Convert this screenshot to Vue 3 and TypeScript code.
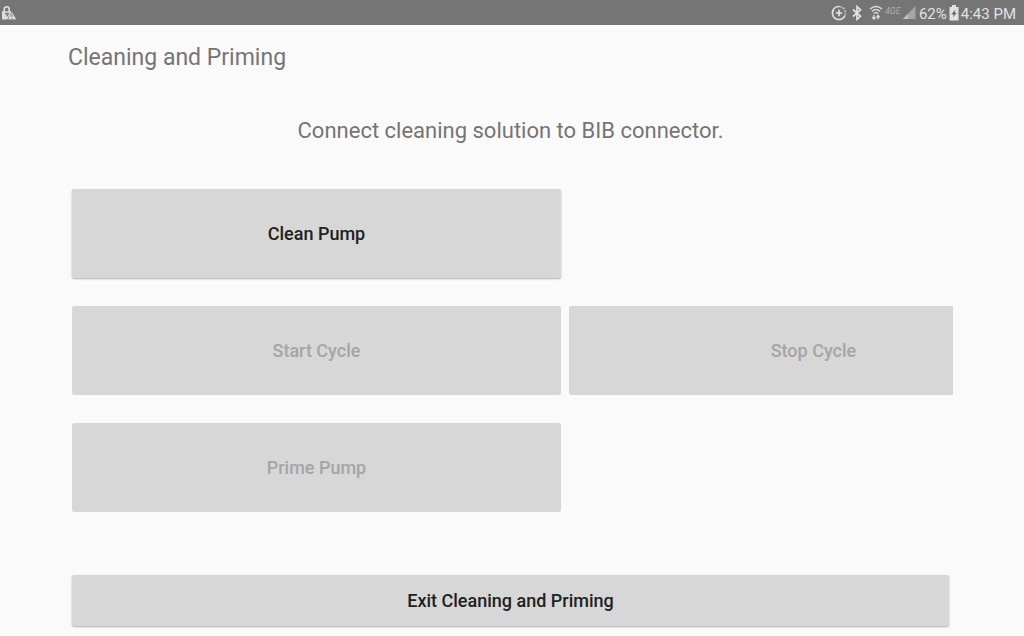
<script setup lang="ts">
import { ref } from 'vue'

interface PumpAction {
  label: string
  disabled: boolean
}

const rows = ref<PumpAction[][]>([
  [{ label: 'Clean Pump', disabled: false }],
  [
    { label: 'Start Cycle', disabled: true },
    { label: 'Stop Cycle', disabled: true },
  ],
  [{ label: 'Prime Pump', disabled: true }],
])
</script>

<template>
  <div class="screen">
    <header class="status">
      <svg class="lock" width="16" height="16" viewBox="0 0 16 16" aria-hidden="true">
        <path d="M3.200 7V4.500a2.500 2.700 0 0 1 5 0V7" fill="none" stroke="#dedede" stroke-width="1.600" />
        <path d="M1 6.200h9.500v2L6.500 14.500H1z" fill="#dedede" />
        <path d="M4 8.500h3.300L5.500 11.500" fill="none" stroke="#757575" stroke-width="1.300" />
        <path d="M11 6.500l4.800 8.300H6.500z" fill="#dedede" stroke="#757575" stroke-width=".7" />
        <path d="M11 9.200v2.600M11 12.800v1" stroke="#757575" stroke-width="1" />
      </svg>
      <div class="indicators">
        <svg class="saver" width="16" height="16" viewBox="0 0 16 16" aria-hidden="true">
          <path d="M8 1.500a6.500 6.500 0 1 0 5.800 9.300" fill="none" stroke="#e4e4e4" stroke-width="1.700" />
          <path d="M8 1.500a6.500 6.500 0 0 1 5.800 9.300" fill="none" stroke="#c2c2c2" stroke-width="1.500" stroke-dasharray="2.500 1" />
          <path d="M8 4.800v6.400M4.800 8h6.400" stroke="#e6e6e6" stroke-width="1.700" />
        </svg>
        <svg class="bluetooth" width="12" height="16" viewBox="0 0 12 16" aria-hidden="true">
          <path d="M2 4.500l7.500 6.700L6 14.300V1.700l3.500 3.100L2 11.500" fill="none" stroke="#e2e2e2" stroke-width="1.700" />
        </svg>
        <svg class="wifi" width="14" height="16" viewBox="0 0 14 16" aria-hidden="true">
          <path d="M1 4q6-5 12 0M2.800 6.300q4.200-3.400 8.400 0M4.700 8.500q2.300-1.800 4.600 0" fill="none" stroke="#dedede" stroke-width="1.400" />
          <path d="M5 10v4M3.300 12L5 14.200l1.500-1.900M9 14.500v-4M7.500 12.300L9 10.300l1.700 2" fill="none" stroke="#dedede" stroke-width="1.300" />
        </svg>
        <span class="network">4GE</span>
        <svg class="signal" width="14" height="14" viewBox="0 0 14 14" aria-hidden="true">
          <path d="M13.500 0v13H1z" fill="#a6a6a6" />
          <path d="M6 7.800V13H1z" fill="#c0c0c0" />
        </svg>
        <span class="percent">62%</span>
        <svg class="battery" width="10" height="16" viewBox="0 0 10 16" aria-hidden="true">
          <path d="M3 0h4v2h2.500v13.500H.5V2H3z" fill="#e2e2e2" />
          <path d="M6.500 4.300L2.500 9.200h2.300L3.800 12.500 7.700 7.800H5.400z" fill="#606060" />
        </svg>
        <time>4:43 PM</time>
      </div>
    </header>
    <main>
      <h1>Cleaning and Priming</h1>
      <p>Connect cleaning solution to BIB connector.</p>
      <div class="actions">
        <div v-for="(row, i) in rows" :key="i" class="row" :class="{ clipped: row.length > 1 }">
          <button v-for="action in row" :key="action.label" type="button" :disabled="action.disabled">
            {{ action.label }}
          </button>
        </div>
      </div>
      <button class="exit" type="button">Exit Cleaning and Priming</button>
    </main>
  </div>
</template>

<style>
body {
  margin: 0;
  background: #fafafa;
}
</style>

<style scoped>
.screen {
  font-family: Roboto, "Liberation Sans", sans-serif;
  color: #757575;
  overflow: hidden;
}
.status {
  height: 25px;
  padding: 0 8px 0 1px;
  display: flex;
  align-items: center;
  justify-content: space-between;
  background: #757575;
  color: #e2e2e2;
  font-size: 15px;
  line-height: 24px;
}
.indicators {
  display: flex;
  align-items: center;
  white-space: nowrap;
}
.percent,
time {
  padding-top: 2px;
}
svg {
  display: block;
  flex: none;
}
.saver {
  margin-right: 4px;
}
.bluetooth {
  margin-right: 6px;
}
.wifi {
  margin-right: 2px;
}
.network {
  width: 17px;
  color: #adadad;
  font-size: 9px;
  font-style: italic;
  line-height: 16px;
  padding-bottom: 4px;
}
.signal {
  margin-right: 3px;
}
.battery {
  margin: 0 2px;
}
main {
  padding: 17px 71px 9px 72px;
}
h1 {
  margin: 0 -4px;
  font-size: 23px;
  font-weight: 400;
  line-height: 32px;
}
p {
  margin: 41px 4px 42px 0;
  font-size: 22px;
  line-height: 32px;
  text-align: center;
}
.actions {
  display: grid;
  gap: 28px;
}
.row {
  display: grid;
  grid-template-columns: 55.5% 55.5%;
  gap: 8px;
}
.clipped {
  overflow: hidden;
}
button {
  height: 89px;
  padding: 0;
  border: 0;
  border-radius: 2px;
  background: #d7d7d7;
  color: #212121;
  font: 500 18px/24px Roboto, "Liberation Sans", sans-serif;
  box-shadow: 0 1px 2px rgba(0, 0, 0, 0.3);
}
button:disabled {
  color: #a5a5a5;
  box-shadow: none;
}
.exit {
  display: block;
  width: calc(100% - 4px);
  height: 51px;
  margin-top: 63px;
}
</style>
